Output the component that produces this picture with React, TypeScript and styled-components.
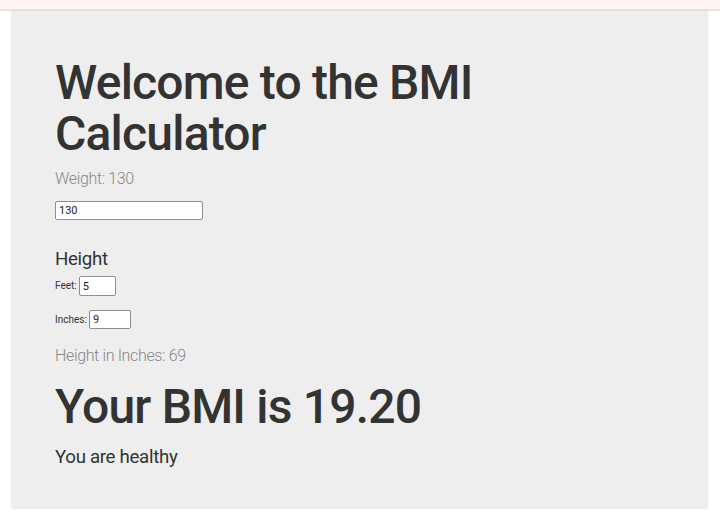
import React from "react";
import styled, { createGlobalStyle } from "styled-components";

const GlobalStyle = createGlobalStyle`
  html, body {
    margin: 0;
    padding: 0;
    background: #ffffff;
    font-family: Roboto, "Liberation Sans", sans-serif;
  }
`;

const TopBar = styled.div`
  height: 9px;
  background: #fff5f2;
  border-bottom: 2px solid #f0dfd8;
`;

const Card = styled.main`
  margin: 0 12px 0 11px;
  padding: 46px 44px 41px 44px;
  background: #eeeeee;
  box-shadow: 0 0 1px rgba(0, 0, 0, 0.18);
  border-radius: 0 0 4px 4px;
  box-sizing: border-box;
  color: #333333;
`;

const Title = styled.h1`
  margin: 0;
  font-size: 48px;
  line-height: 51px;
  font-weight: 500;
  letter-spacing: -0.8px;
  color: #333333;
`;

const Light = styled.p<{ $gap: number }>`
  margin: ${(p) => p.$gap}px 0 0;
  font-size: 16px;
  line-height: 19px;
  font-weight: 300;
  letter-spacing: -0.35px;
  color: #878787;
`;

const TextInput = styled.input<{ $w: number; $h?: number; $gap?: number }>`
  display: block;
  box-sizing: border-box;
  width: ${(p) => p.$w}px;
  height: ${(p) => p.$h ?? 19}px;
  margin: ${(p) => p.$gap ?? 0}px 0 0;
  padding: 0 3px;
  font-family: Roboto, "Liberation Sans", sans-serif;
  font-size: 11px;
  color: #222;
  background: #fff;
  border: 1px solid #8f8f8f;
  border-radius: 2px;
  outline: none;
`;

const SubHeading = styled.h3<{ $gap: number }>`
  margin: ${(p) => p.$gap}px 0 0;
  font-size: 18.72px;
  line-height: 22px;
  font-weight: 400;
  letter-spacing: -0.33px;
  color: #333333;
`;

const Field = styled.label<{ $gap: number }>`
  display: flex;
  align-items: center;
  gap: 2px;
  margin-top: ${(p) => p.$gap}px;
  color: #333333;
`;

const Small = styled.span`
  font-size: 10px;
  line-height: 12px;
`;

const Result = styled.h2`
  margin: 16px 0 0;
  font-size: 48px;
  line-height: 51px;
  font-weight: 500;
  letter-spacing: -0.8px;
  color: #333333;
`;

export default function App() {
  const weight = 130;
  const feet = 5;
  const inches = 9;
  const total = feet * 12 + inches;
  const bmi = ((weight / (total * total)) * 703).toFixed(2);
  return (
    <>
      <GlobalStyle />
      <TopBar />
      <Card>
        <Title>
          Welcome to the BMI
          <br />
          Calculator
        </Title>
        <Light $gap={10}>Weight: {weight}</Light>
        <TextInput $w={148} $gap={13} defaultValue={String(weight)} />
        <SubHeading $gap={28}>Height</SubHeading>
        <Field $gap={6}>
          <Small>Feet:</Small>
          <TextInput $w={37} $h={20} defaultValue={String(feet)} />
        </Field>
        <Field $gap={14}>
          <Small>Inches:</Small>
          <TextInput $w={42} defaultValue={String(inches)} />
        </Field>
        <Light $gap={17}>Height in Inches: {total}</Light>
        <Result>Your BMI is {bmi}</Result>
        <SubHeading $gap={14}>You are healthy</SubHeading>
      </Card>
    </>
  );
}
